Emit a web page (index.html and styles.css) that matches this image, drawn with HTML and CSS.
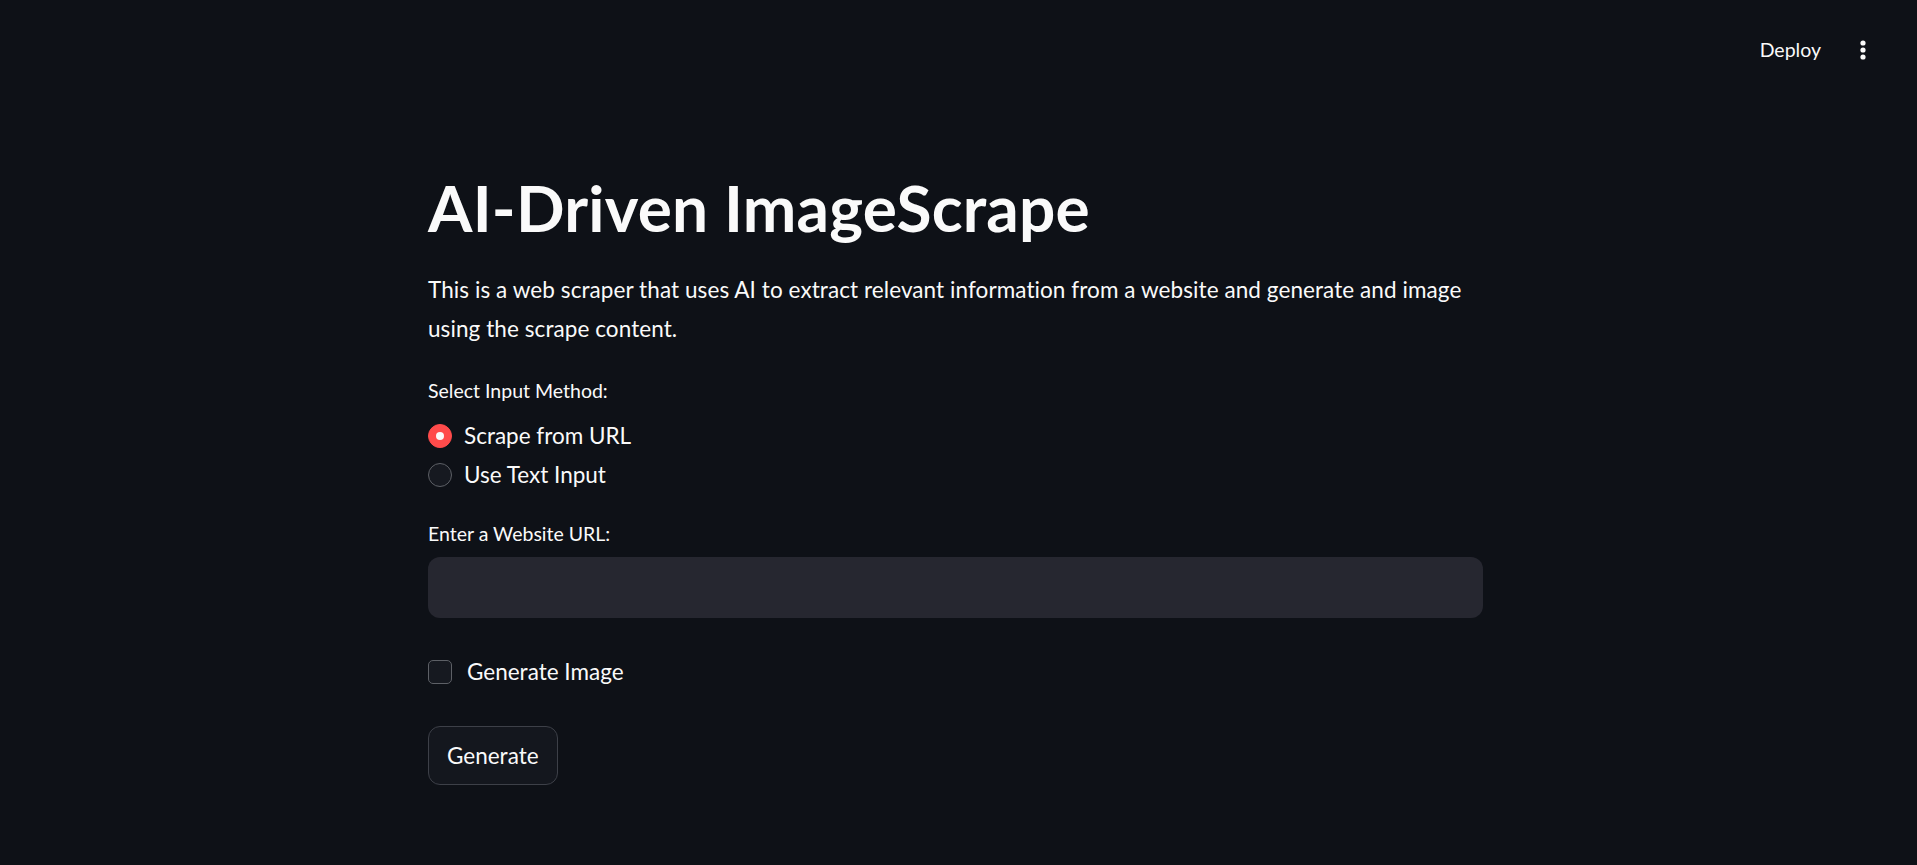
FILE: index.html
```html
<!DOCTYPE html>
<html lang="en">
<head>
<meta charset="utf-8">
<title>AI-Driven ImageScrape</title>
<link rel="stylesheet" href="styles.css">
</head>
<body>
<header class="topbar">
  <span class="deploy">Deploy</span>
  <span class="menu" aria-label="Main menu">
    <svg width="6" height="20" viewBox="0 0 6 20"><circle cx="3" cy="3" r="2.6" fill="#fafafa"/><circle cx="3" cy="10" r="2.6" fill="#fafafa"/><circle cx="3" cy="17" r="2.6" fill="#fafafa"/></svg>
  </span>
</header>
<main class="main">
  <h1 class="title">AI-Driven ImageScrape</h1>
  <p class="intro">This is a web scraper that uses AI to extract relevant information from a website and generate and image using the scrape content.</p>

  <div class="label label-radio">Select Input Method:</div>
  <div class="radio-group">
    <div class="radio-row"><span class="radio checked"></span><span class="opt">Scrape from URL</span></div>
    <div class="radio-row"><span class="radio"></span><span class="opt">Use Text Input</span></div>
  </div>

  <div class="label label-input">Enter a Website URL:</div>
  <div class="input"></div>

  <div class="check-row"><span class="checkbox"></span><span class="opt check-text">Generate Image</span></div>

  <button class="btn">Generate</button>
</main>
</body>
</html>
```
FILE: styles.css
```css
html, body {
  margin: 0;
  padding: 0;
  background: #0e1117;
  color: #fafafa;
  font-family: Lato, "Noto Sans", sans-serif;
}

.topbar {
  height: 99px;
  display: flex;
  justify-content: flex-end;
  align-items: center;
  padding-right: 51px;
  gap: 39px;
}

.deploy {
  font-size: 19.5px;
  line-height: 1;
}

.menu {
  display: flex;
  align-items: center;
}

.menu svg { display: block; }

.main {
  width: 1055px;
  margin-left: 428px;
  padding-top: 72px;
}

.title {
  margin: 0;
  font-size: 64px;
  line-height: 74px;
  font-weight: 700;
  letter-spacing: 0.2px;
}

.intro {
  margin: 25px 0 0;
  font-size: 22.5px;
  line-height: 39px;
  letter-spacing: 0.08px;
}

.label {
  font-size: 19.5px;
  line-height: 28px;
}

.label-radio { margin-top: 29px; }

.radio-group {
  margin-top: 11px;
  display: flex;
  flex-direction: column;
}

.radio-row, .check-row {
  display: flex;
  align-items: center;
  height: 39px;
}

.radio {
  width: 24px;
  height: 24px;
  border-radius: 50%;
  box-sizing: border-box;
  border: 1.5px solid #5d6066;
  background: #161920;
  margin-right: 12px;
  display: flex;
  align-items: center;
  justify-content: center;
  flex: none;
}

.radio.checked {
  background: #ff4b4b;
  border-color: #ff4b4b;
}

.radio.checked::after {
  content: "";
  width: 8px;
  height: 8px;
  border-radius: 50%;
  background: #fafafa;
}

.opt {
  font-size: 22.5px;
  line-height: 39px;
}

.label-input { margin-top: 26px; }

.input {
  margin-top: 9px;
  height: 61px;
  border-radius: 12px;
  background: #262730;
}

.check-row { margin-top: 34px; }

.checkbox {
  width: 24px;
  height: 24px;
  box-sizing: border-box;
  border: 1.5px solid #5d6066;
  border-radius: 5px;
  background: #161920;
  margin-right: 15px;
  flex: none;
}

.btn {
  display: block;
  margin-top: 35px;
  height: 59px;
  padding: 0 18px;
  box-sizing: border-box;
  border: 1px solid #3d4048;
  border-radius: 12px;
  background: #14171e;
  color: #fafafa;
  font-family: Lato, "Noto Sans", sans-serif;
  font-size: 22.5px;
  line-height: 57px;
}
```
